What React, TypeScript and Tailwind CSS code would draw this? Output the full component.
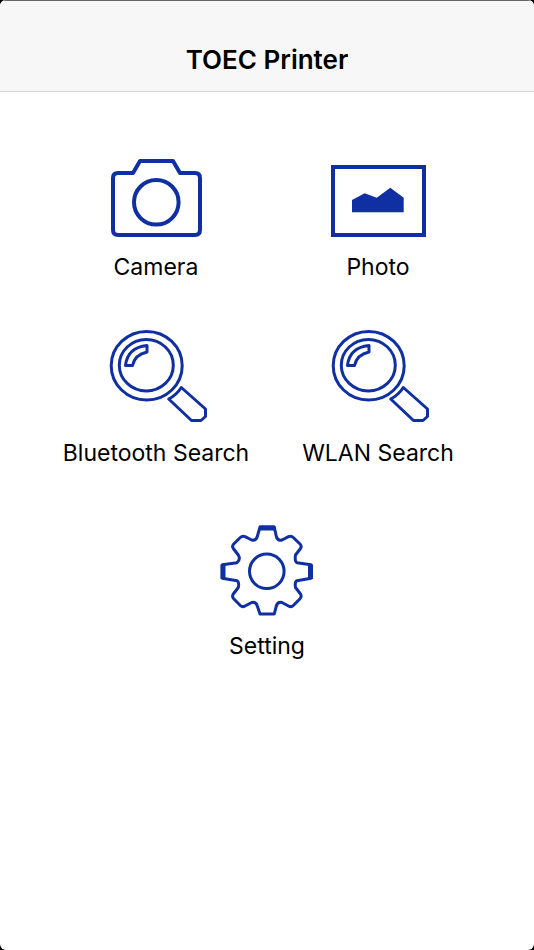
import React from 'react';

type TileProps = {
  label: string;
  children: React.ReactNode;
};

const Tile = ({ label, children }: TileProps) => (
  <button type="button" className="flex flex-col items-center gap-1 text-black">
    <svg
      viewBox="0 0 104 104"
      className="h-26 w-26 text-[#0f2fa3]"
      fill="none"
      stroke="currentColor"
      strokeWidth="3"
      strokeLinejoin="round"
      aria-hidden="true"
    >
      {children}
    </svg>
    <span className="text-[23px] leading-[34px] whitespace-nowrap">{label}</span>
  </button>
);

const CameraDrawing = () => (
  <g strokeWidth="4">
    <path d="M29 31 L36 19 H69 L76 31 H91 Q96 31 96 36 V88 Q96 93 91 93 H14 Q9 93 9 88 V36 Q9 31 14 31 Z" />
    <circle cx="52.3" cy="60.3" r="22.3" />
  </g>
);

const PhotoDrawing = () => (
  <>
    <rect x="7" y="25" width="91" height="68" strokeWidth="4" strokeLinejoin="miter" />
    <path
      d="M26 58 L38.7 51.3 L50.7 55.7 L64.3 45.7 L77.7 55.7 V70.3 H26 Z"
      fill="currentColor"
      stroke="none"
    />
  </>
);

const SearchDrawing = () => (
  <>
    <ellipse cx="42.7" cy="37.7" rx="35.5" ry="34.3" />
    <ellipse cx="42.3" cy="37.2" rx="27" ry="25.7" />
    <path d="M21.5 37.5 H28.5 Q31 26.5 43 24 V17.5 Q23.5 19.5 21.5 37.5 Z" />
    <path d="M77.3 59.5 L101.5 81 V88.5 L97 92.5 H87.5 L64.7 71 Q72.5 67 77.3 59.5 Z" />
  </>
);

const GearDrawing = () => (
  <>
    <path d="M45 6 H59.3 L61.3 15.5 Q62.5 20 67 19 L73.5 15.7 Q76.3 14.5 78.3 16.5 L85 23 Q87 25 85.5 27.5 L80.5 34 Q79.5 40.5 82 41.7 L96 43.7 V57.3 L82 59.7 Q79.5 61 80.5 66.5 L85.5 73 Q87 75.5 85 77.7 L78.3 84.5 Q76.3 86.5 73.5 85 L67 81.5 Q62.5 80.5 61.3 85 L59.3 93 H45 L42.3 85 Q41 80.5 36.7 81.5 L30 85 Q27.5 86.5 25.3 84.5 L18.7 77.7 Q16.7 75.5 18.3 73 L23.3 66.5 Q24.5 61 22 59.7 L7.3 57.3 V43.7 L22 41.7 Q26 38 23.3 34 L18.3 27.5 Q16.7 25 18.7 23 L25.3 16.5 Q27.5 14.5 30 15.7 L36.7 19 Q41 20 42.3 15.5 Z" />
    <path d="M44.5 7 H59.5 M8 43.5 V58 M95.5 43.5 V58" strokeWidth="5" />
    <circle cx="51.8" cy="50.3" r="17.3" />
  </>
);

const App = () => (
  <div className="min-h-screen bg-black font-['Inter',sans-serif]">
    <div className="min-h-screen overflow-hidden rounded-md bg-white">
      <header className="border-t border-b border-t-[#666666] border-b-[#d4d4d4] bg-[#f7f7f7] pt-10 pb-3">
        <h1 className="text-center text-[26px] leading-[38px] font-semibold text-black">
          TOEC Printer
        </h1>
      </header>

      <main className="px-[45px] pt-[50px]">
        <div className="grid grid-cols-2 gap-y-11">
          <Tile label="Camera">
            <CameraDrawing />
          </Tile>
          <Tile label="Photo">
            <PhotoDrawing />
          </Tile>
          <Tile label="Bluetooth Search">
            <SearchDrawing />
          </Tile>
          <Tile label="WLAN Search">
            <SearchDrawing />
          </Tile>
        </div>
        <div className="mt-[51px] flex justify-center">
          <Tile label="Setting">
            <GearDrawing />
          </Tile>
        </div>
      </main>
    </div>
  </div>
);

export default App;
